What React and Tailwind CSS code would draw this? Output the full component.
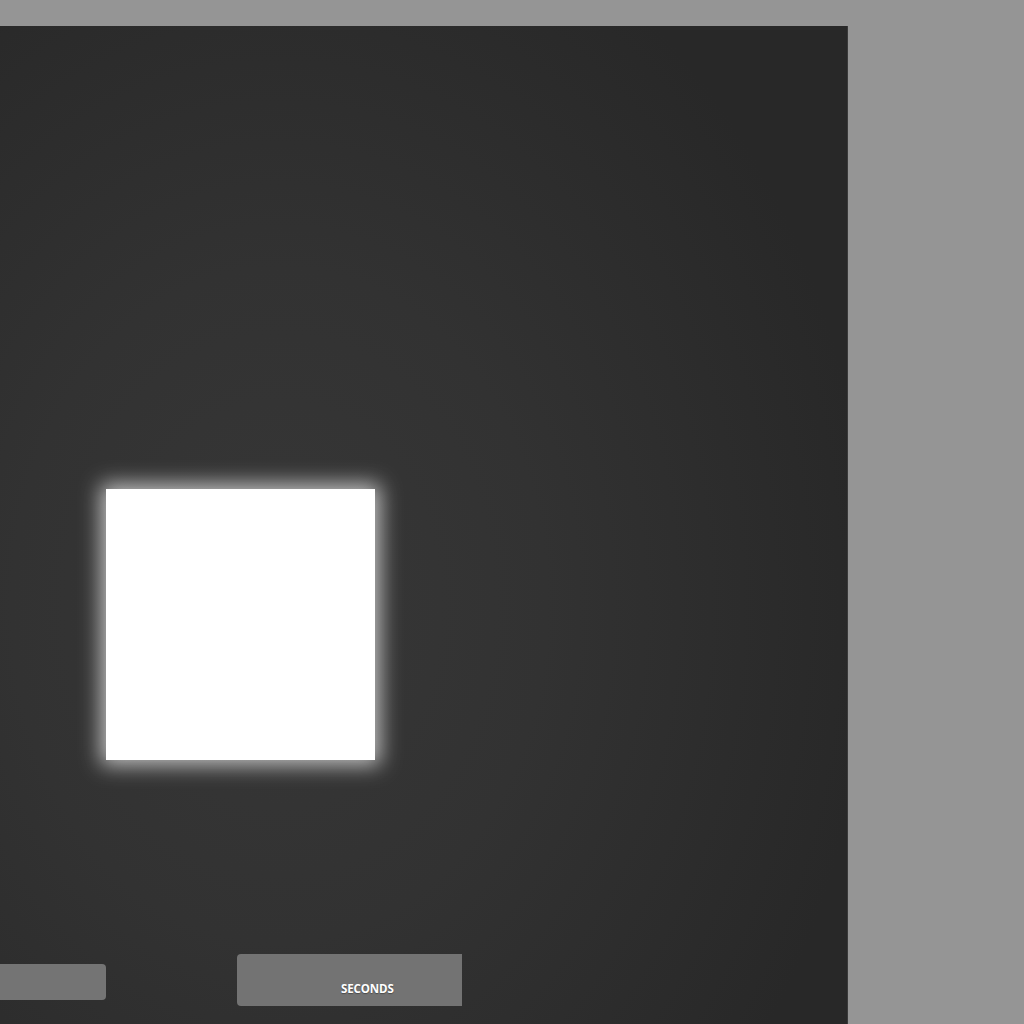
export default function App() {
  return (
    <div className="w-full h-screen bg-[#959595] pt-[26px] overflow-hidden">
      <div className="w-[848px] h-[998px] border-r border-[#3a3a3a] bg-[radial-gradient(ellipse_70%_75%_at_33%_58%,#373737_0%,#323232_45%,#282828_100%)] flex flex-col overflow-hidden">
        <div className="mt-[463px] ml-[106px] w-[269px] h-[271px] bg-white shadow-[0_0_20px_5px_rgba(255,255,255,0.7)]" />
        <div className="mt-[194px] flex items-start">
          <div className="mt-[10px] w-[106px] h-[36px] bg-[#747474] rounded-r-[4px]" />
          <div className="ml-[131px] w-[225px] h-[52px] bg-[#737373] rounded-l-[4px] flex items-end pb-[12px] pl-[104px]">
            <span className="text-white text-[11.5px] font-bold leading-none tracking-[-0.01em] [text-shadow:0_1px_1px_rgba(0,0,0,0.35)] font-['Open_Sans',sans-serif]">
              SECONDS
            </span>
          </div>
        </div>
      </div>
    </div>
  );
}
